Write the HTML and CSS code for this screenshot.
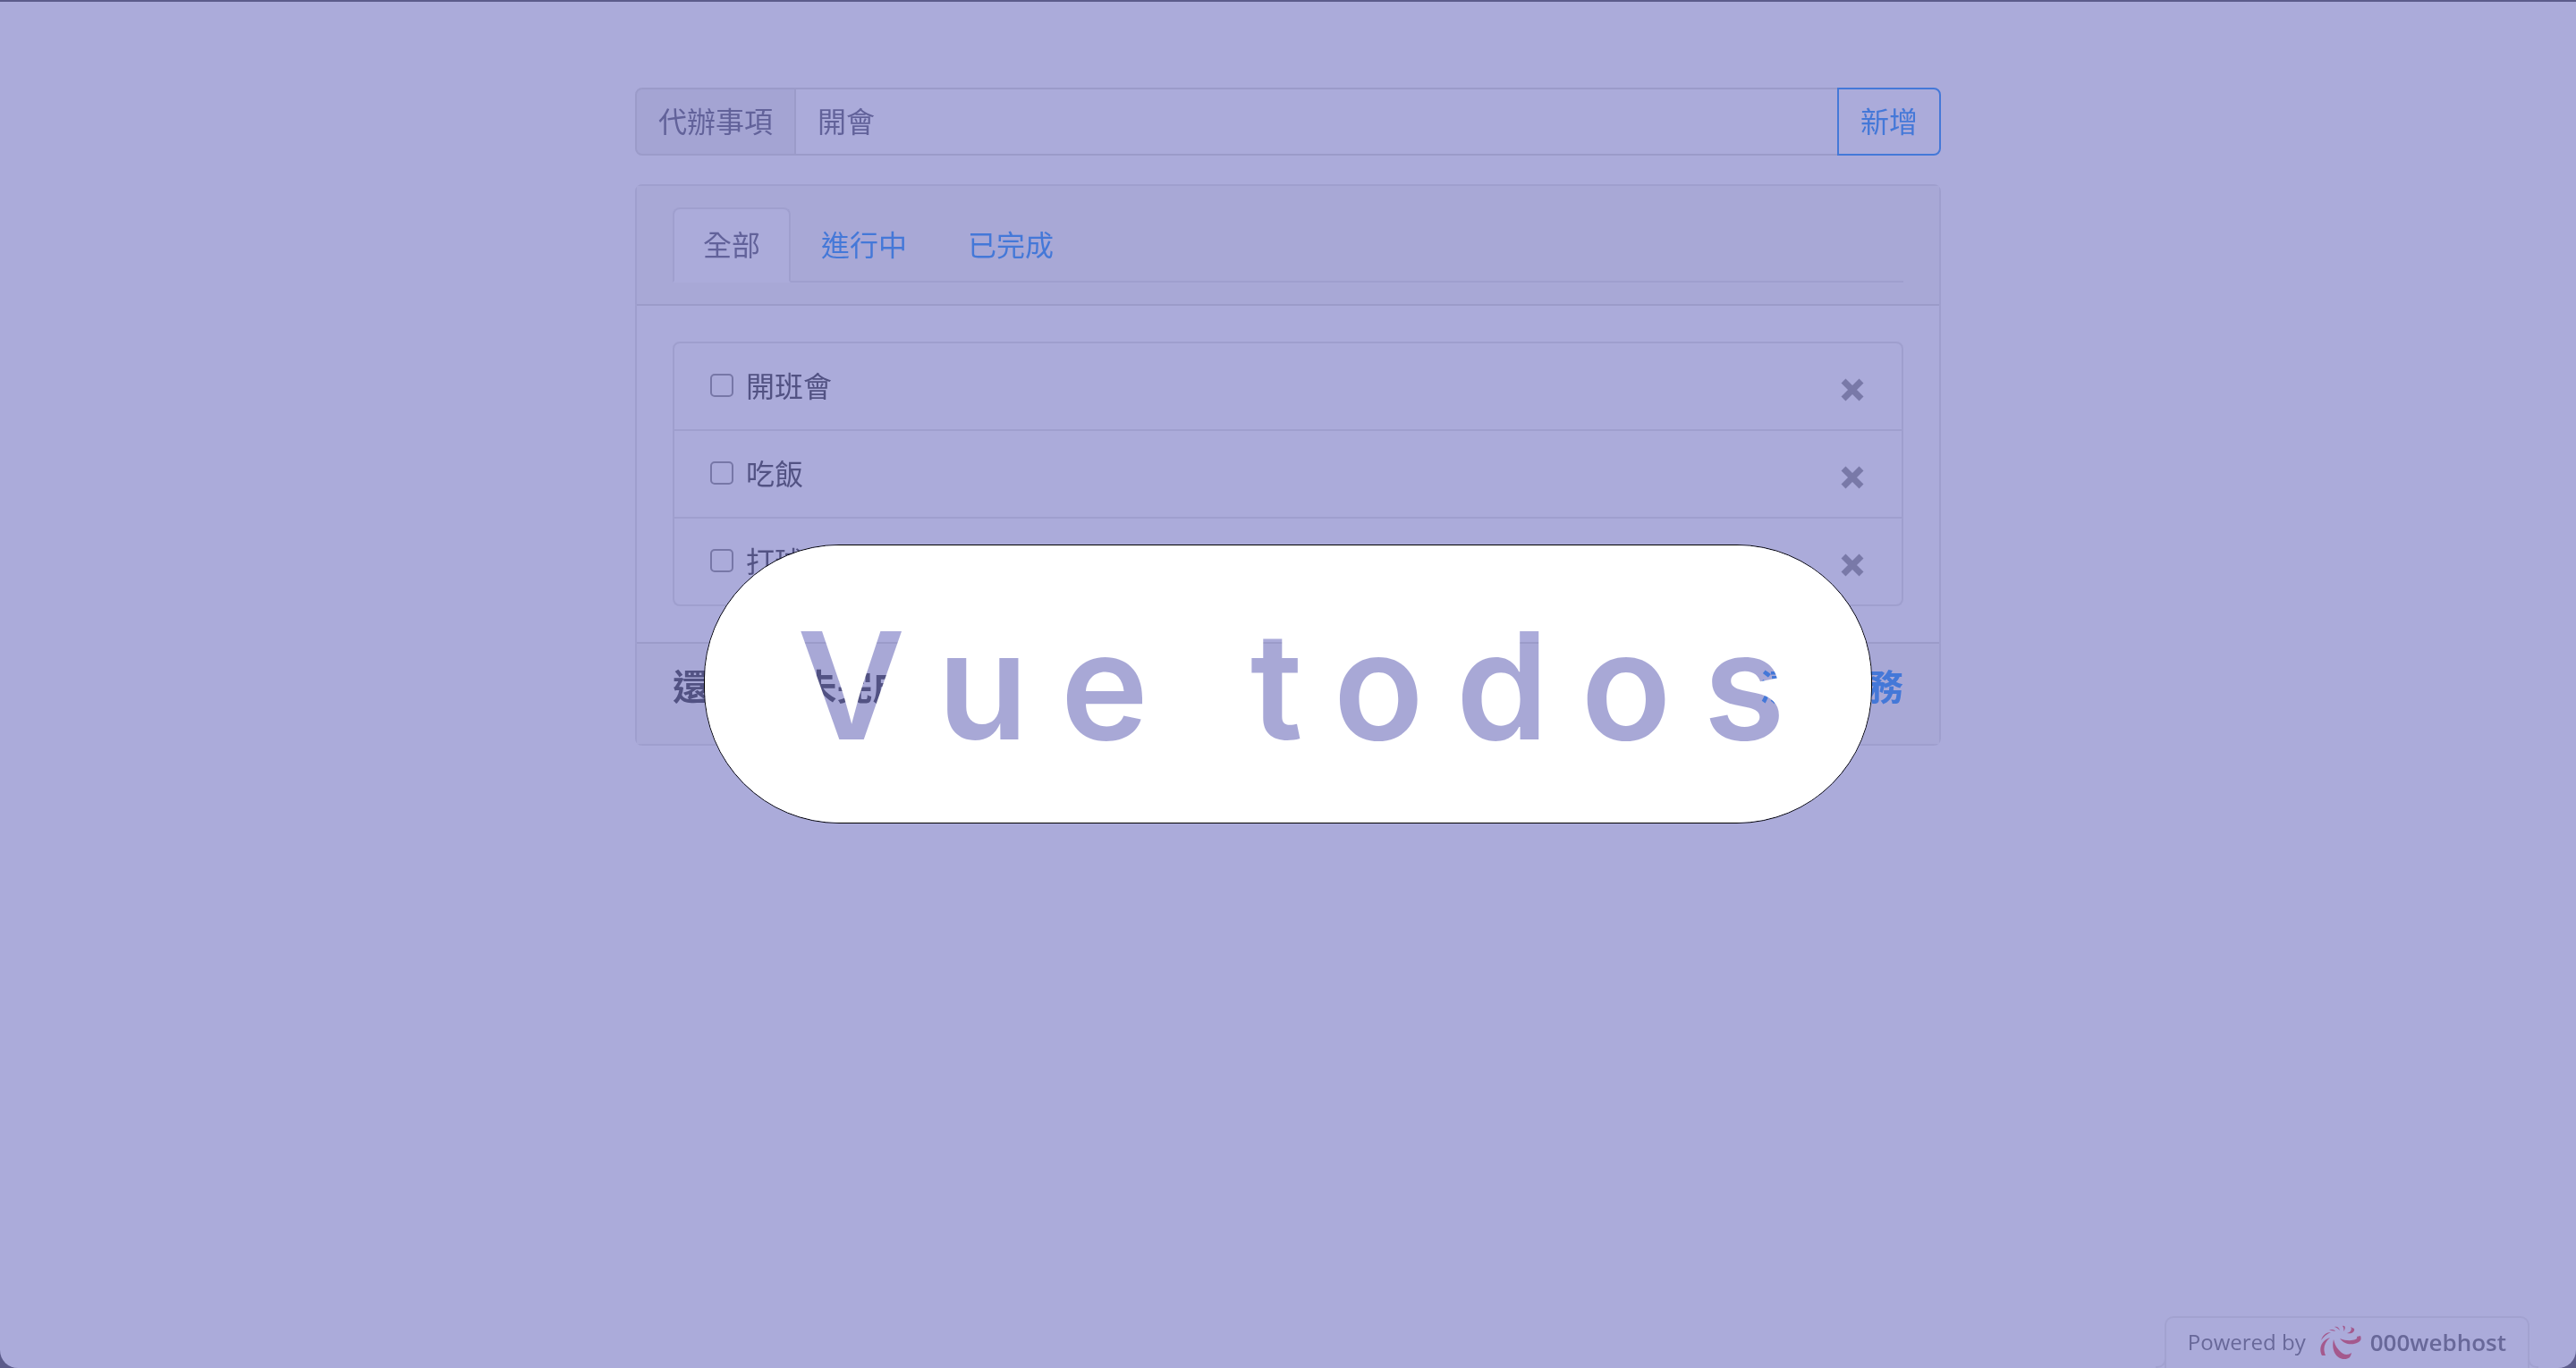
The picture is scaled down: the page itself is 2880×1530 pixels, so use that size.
FILE: index.html
```html
<!DOCTYPE html>
<html lang="zh-Hant">
<head>
  <meta charset="utf-8">
  <title>Vue todos</title>
  <link rel="stylesheet" href="styles.css">
</head>
<body>
  <div class="page">
    <main class="container">
      <form class="input-group">
        <label class="addon" for="new-todo">代辦事項</label>
        <input class="field" id="new-todo" type="text" value="開會">
        <button class="btn-add" type="button">新增</button>
      </form>

      <section class="card">
        <header class="card-header">
          <nav class="tabs">
            <a class="tab tab-active" href="#all">全部</a>
            <a class="tab" href="#active">進行中</a>
            <a class="tab" href="#done">已完成</a>
          </nav>
        </header>
        <div class="card-body">
          <ul class="list">
            <li class="item">
              <label class="todo"><input class="check" type="checkbox">開班會</label>
              <button class="close" type="button" aria-label="刪除"><svg class="cross" viewBox="0 0 26 26"><path d="M3 3 23 23M23 3 3 23"/></svg></button>
            </li>
            <li class="item">
              <label class="todo"><input class="check" type="checkbox">吃飯</label>
              <button class="close" type="button" aria-label="刪除"><svg class="cross" viewBox="0 0 26 26"><path d="M3 3 23 23M23 3 3 23"/></svg></button>
            </li>
            <li class="item">
              <label class="todo"><input class="check" type="checkbox">打球</label>
              <button class="close" type="button" aria-label="刪除"><svg class="cross" viewBox="0 0 26 26"><path d="M3 3 23 23M23 3 3 23"/></svg></button>
            </li>
          </ul>
        </div>
        <footer class="card-footer">
          <span>還有3筆未完成</span>
          <a class="clear" href="#clear">清除任務</a>
        </footer>
      </section>
    </main>

    <a class="host-badge" href="#host">
      <span class="powered">Powered by</span>
      <svg class="host-logo" viewBox="0 0 46 38" aria-hidden="true">
        <path d="M15 16C12 28 18 38 27 38C32 38 34 36 35 31C31 34 26 34 21 28C17 24 16 20 15 16Z"/>
        <path d="M22 15C27 22 36 23 43 19C46 17 46 15 45 12L41 13C43 17 31 19 22 15Z"/>
        <path d="M30 9C34 8 36 5 34 2L38 4C39 8 35 10 30 9Z"/>
        <path d="M25 1C28 0 29 4 26 7C27 4 26 3 25 1Z"/>
        <path d="M16 2C19 1 21 3 22 6C20 4 19 3 16 2Z"/>
        <path d="M10 6C13 4 16 5 17 7C14 6 13 6 10 6Z"/>
        <path d="M1 17C3 11 7 8 12 8C7 10 4 13 1 17Z"/>
        <path d="M11 14C1 17-2 27 2 34L6 34C3 27 4 20 11 14Z"/>
      </svg>
      <span class="host-name">000webhost</span>
    </a>
  </div>

  <div class="cover">
    <div class="pill">
      <h1 class="title">Vue todos</h1>
    </div>
  </div>
</body>
</html>
```
FILE: styles.css
```css
* {
  box-sizing: border-box;
}

body {
  position: relative;
  margin: 0;
  background: #5c5c8b;
  color: #525283;
  font: 32px/48px "Noto Sans CJK TC", sans-serif;
}

a {
  color: #4478d8;
  text-decoration: none;
}

.page {
  display: flex;
  flex-direction: column;
  justify-content: space-between;
  min-height: 100vh;
  padding-top: 96px;
  border-top: 2px solid #5c5c8b;
  border-radius: 0 0 20px 20px;
  background: #ababda padding-box;
}

.container {
  width: 100%;
  max-width: 1460px;
  margin: 0 auto;
}

.input-group {
  display: flex;
  margin-bottom: 32px;
}

.addon,
.field,
.btn-add {
  height: 76px;
  padding: 10px 24px 14px;
  border: 2px solid #9b9bc9;
  color: #62629a;
  font: inherit;
}

.addon {
  border-radius: 8px 0 0 8px;
  background: #a4a4d3;
}

.field {
  flex: 1;
  min-width: 0;
  margin-left: -2px;
  border-radius: 0;
  background: transparent;
}

.btn-add {
  margin-left: -2px;
  border-color: #4478d8;
  border-radius: 0 8px 8px 0;
  background: #ababda;
  color: #4478d8;
}

.card {
  border: 2px solid #9f9fce;
  border-radius: 8px;
}

.card-header {
  padding: 24px 40px;
  border-bottom: 2px solid #9b9bc9;
  background: #a8a8d6;
}

.tabs {
  display: flex;
  border-bottom: 2px solid #9f9fce;
}

.tab {
  margin-bottom: -2px;
  padding: 14px 32px 18px;
  border: 2px solid transparent;
  border-radius: 8px 8px 0 0;
}

.tab-active {
  border-color: #9f9fce;
  border-bottom-color: #ababda;
  background: #ababda;
  color: #62629a;
}

.card-body {
  padding: 40px;
}

.list {
  margin: 0;
  padding: 0;
  border: 2px solid #9f9fce;
  border-radius: 8px;
  list-style: none;
}

.item {
  display: flex;
  justify-content: space-between;
  align-items: center;
  padding: 22px 40px 26px;
}

.item + .item {
  border-top: 2px solid #9f9fce;
}

.todo {
  display: flex;
  align-items: center;
  gap: 14px;
}

.check {
  appearance: none;
  width: 26px;
  height: 26px;
  margin: 2px 0 0;
  border: 2px solid #7777a7;
  border-radius: 5px;
}

.close {
  display: flex;
  padding: 12px 2px 0;
  border: 0;
  background: none;
}

.cross {
  width: 26px;
  height: 26px;
  fill: none;
  stroke: #7979a8;
  stroke-width: 7;
}

.card-footer {
  display: flex;
  justify-content: space-between;
  padding: 22px 40px 42px;
  border-top: 2px solid #9b9bc9;
  background: #a8a8d6;
  font-size: 40px;
  font-weight: 700;
}

.host-badge {
  position: relative;
  display: flex;
  align-items: center;
  align-self: flex-end;
  gap: 16px;
  height: 58px;
  margin-right: 52px;
  padding: 0 24px 2px;
  border: 2px solid #a2a2d0;
  border-bottom: 0;
  border-radius: 10px 10px 0 0;
  color: #686899;
  font: 24px/36px "Open Sans", sans-serif;
}

/* Small outward curves where the badge meets the window's edge. */
.host-badge::before,
.host-badge::after {
  content: "";
  position: absolute;
  bottom: 0;
  width: 10px;
  height: 10px;
  border-bottom: 2px solid #a2a2d0;
}

.host-badge::before {
  right: 100%;
  border-right: 2px solid #a2a2d0;
  border-bottom-right-radius: 10px;
}

.host-badge::after {
  left: 100%;
  border-left: 2px solid #a2a2d0;
  border-bottom-left-radius: 10px;
}

.host-logo {
  width: 46px;
  height: 38px;
  fill: #a4598d;
}

.host-name {
  margin-left: -6px;
  font-size: 26px;
  font-weight: 600;
}

.cover {
  position: absolute;
  inset: 0;
  display: flex;
  align-items: center;
  justify-content: center;
}

.pill {
  border: 1px solid #000;
  border-radius: 151px;
}

/* Screen blending turns the black lettering into a cut-out of the page below. */
.title {
  margin: 0;
  padding: 61px 60px 57px 103px;
  border-radius: 150px;
  background: #fff;
  color: #000;
  font: 600 166px/192px Inter, sans-serif;
  letter-spacing: 36px;
  mix-blend-mode: screen;
}
```
